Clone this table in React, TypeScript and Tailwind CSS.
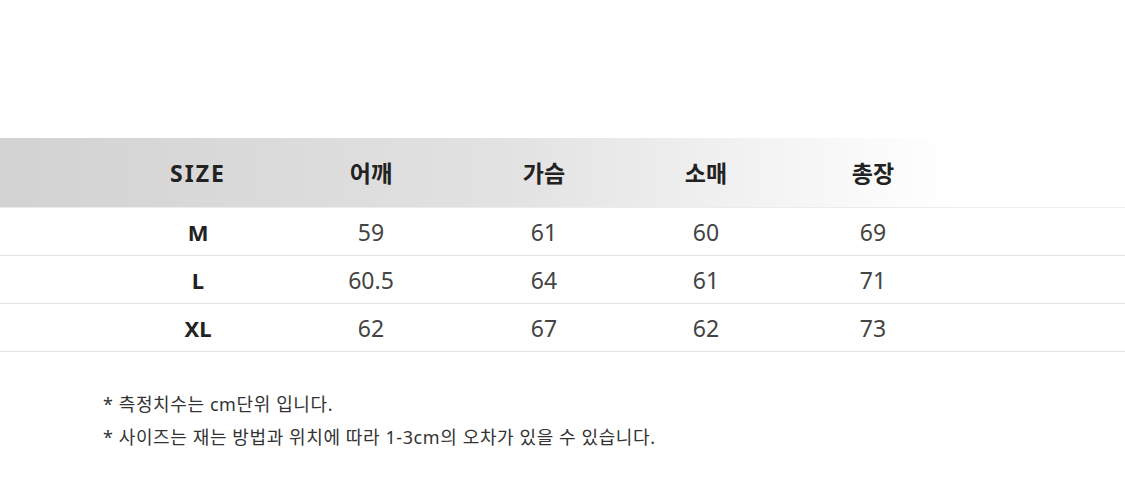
import React from 'react';

const headers = ['SIZE', '어깨', '가슴', '소매', '총장'];

const rows = [
  ['M', '59', '61', '60', '69'],
  ['L', '60.5', '64', '61', '71'],
  ['XL', '62', '67', '62', '73'],
];

const cols = 'grid grid-cols-[170px_176px_170px_154px_180px] pl-[113px]';

export default function App() {
  return (
    <div
      className="w-[1125px] h-[483px] bg-white pt-[138px]"
      style={{ fontFamily: '"Noto Sans", "Noto Sans CJK KR", sans-serif' }}
    >
      {/* Header */}
      <div className="h-[70px] bg-[linear-gradient(to_right,#d2d2d2_0%,#e2e2e2_45%,#fcfcfc_80%,#ffffff_85%)] border-b border-[#ececec]">
        <div className={`${cols} h-full items-center`}>
          {headers.map((h, i) => (
            <div
              key={h}
              className={`text-center text-[23px] font-bold text-[#222] pt-[2px] ${i === 0 ? 'tracking-[2px]' : ''}`}
            >
              {h}
            </div>
          ))}
        </div>
      </div>

      {/* Rows */}
      {rows.map((r) => (
        <div key={r[0]} className="h-[48px] border-b border-[#e3e3e3]">
          <div className={`${cols} h-full items-center`}>
            {r.map((v, i) => (
              <div
                key={i}
                className={
                  i === 0
                    ? 'text-center text-[22px] font-bold text-[#222] pt-[2px]'
                    : 'text-center text-[23px] text-[#444] pt-[2px]'
                }
              >
                {v}
              </div>
            ))}
          </div>
        </div>
      ))}

      {/* Notes */}
      <div className="pl-[103px] pt-[36px] text-[18px] tracking-[0.6px] text-[#333] leading-[33px]">
        <p>* 측정치수는 cm단위 입니다.</p>
        <p>* 사이즈는 재는 방법과 위치에 따라 1-3cm의 오차가 있을 수 있습니다.</p>
      </div>
    </div>
  );
}
